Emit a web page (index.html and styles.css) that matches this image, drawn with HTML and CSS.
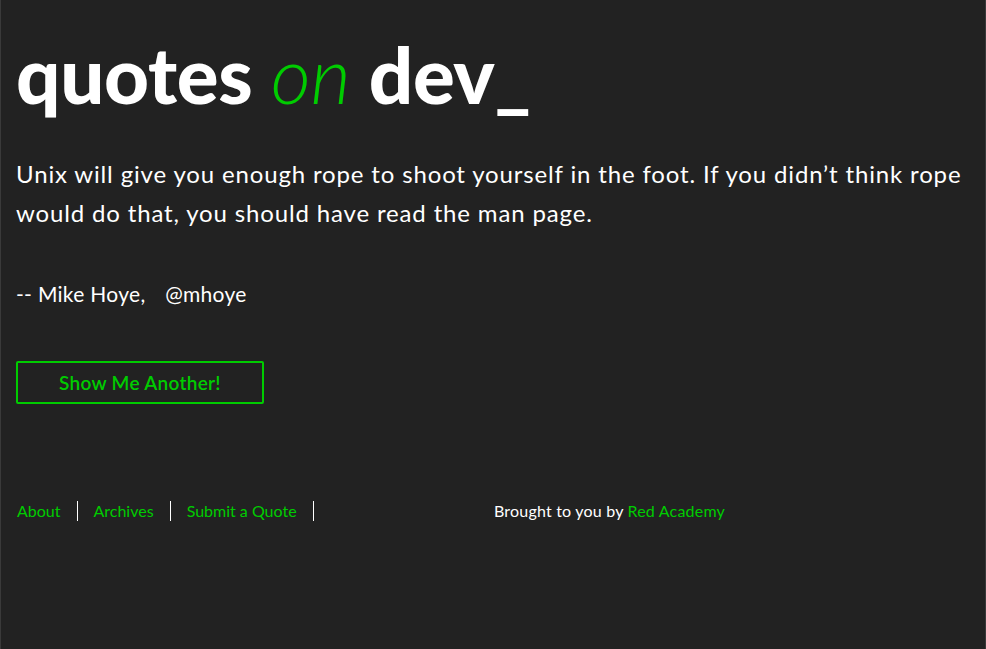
FILE: index.html
```html
<!DOCTYPE html>
<html lang="en">
<head>
<meta charset="utf-8">
<title>Quotes on Dev</title>
<link rel="stylesheet" href="styles.css">
</head>
<body>
<div class="page">
  <header class="masthead">
    <h1 class="logo">quotes <span class="logo-on">on</span> dev_</h1>
  </header>
  <main class="quote">
    <p class="quote-text">Unix will give you enough rope to shoot yourself in the foot. If you didn’t think rope would do that, you should have read the man page.</p>
    <p class="quote-author">-- Mike Hoye, <span class="quote-source">@mhoye</span></p>
    <button class="another" type="button">Show Me Another!</button>
  </main>
  <footer class="site-footer">
    <nav class="footer-nav">
      <a class="footer-link" href="#">About</a>
      <a class="footer-link" href="#">Archives</a>
      <a class="footer-link" href="#">Submit a Quote</a>
    </nav>
    <p class="credit">Brought to you by <a class="credit-link" href="#">Red Academy</a></p>
  </footer>
</div>
</body>
</html>
```
FILE: styles.css
```css
html, body {
  margin: 0;
  padding: 0;
  height: 100%;
}
body {
  background: #222222;
  color: #ffffff;
  font-family: "Lato", "Open Sans", sans-serif;
}
.page {
  box-sizing: border-box;
  min-height: 100%;
  border-left: 1px solid #3a3a3a;
  border-right: 1px solid #3a3a3a;
  padding: 21px 15px 0 15px;
}
.masthead {
  margin: 0;
}
.logo {
  margin: 0;
  font-size: 78px;
  font-weight: 900;
  line-height: 106px;
  letter-spacing: -0.3px;
  color: #ffffff;
}
.logo-on {
  font-weight: 300;
  font-style: italic;
  color: #00cc00;
}
.quote {
  margin-top: 27px;
}
.quote-text {
  margin: 0;
  font-size: 24px;
  font-weight: 400;
  line-height: 39px;
  letter-spacing: 0.85px;
}
.quote-author {
  margin: 48px 0 0 0;
  font-size: 21px;
  line-height: 28px;
  letter-spacing: 0.3px;
}
.quote-source {
  margin-left: 14px;
}
.another {
  display: block;
  margin-top: 53px;
  width: 248px;
  height: 43px;
  background: transparent;
  border: 2px solid #00cc00;
  border-radius: 2px;
  color: #00cc00;
  font-family: inherit;
  font-size: 19px;
  font-weight: 600;
  letter-spacing: 0.3px;
  cursor: pointer;
}
.site-footer {
  display: flex;
  margin-top: 97px;
  font-size: 16px;
  line-height: 20px;
}
.footer-nav {
  flex: 1;
  display: flex;
  align-items: center;
}
.footer-link {
  color: #00cc00;
  text-decoration: none;
  padding: 0 16px;
  border-right: 1px solid #ffffff;
}
.footer-link:first-child {
  padding-left: 1px;
}
.credit {
  flex: 1;
  margin: 0;
  padding-left: 2px;
  letter-spacing: 0.2px;
}
.credit-link {
  color: #00cc00;
  text-decoration: none;
}
```
